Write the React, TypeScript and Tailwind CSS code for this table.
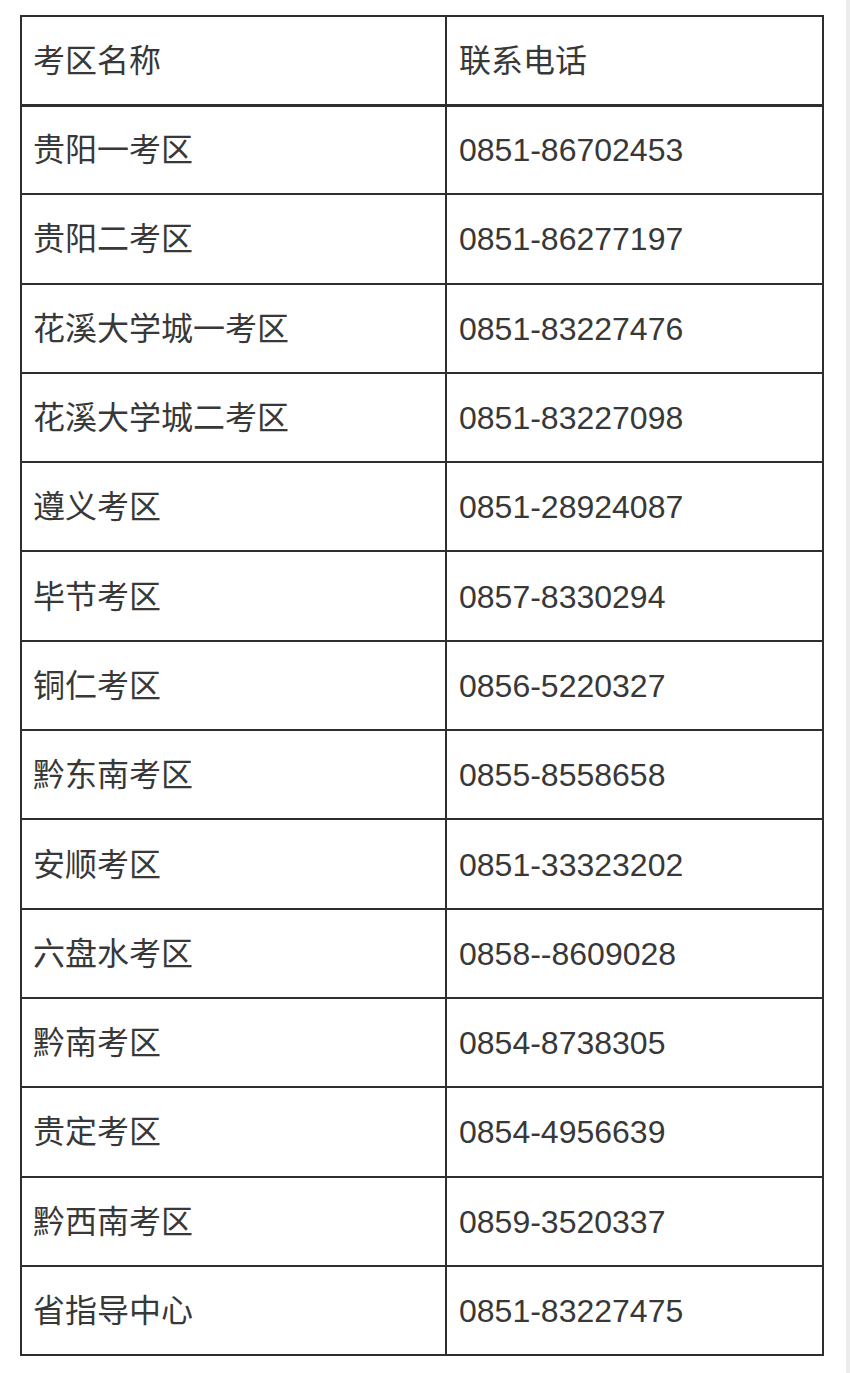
import React from 'react';

const rows: [string, string][] = [
  ['贵阳一考区', '0851-86702453'],
  ['贵阳二考区', '0851-86277197'],
  ['花溪大学城一考区', '0851-83227476'],
  ['花溪大学城二考区', '0851-83227098'],
  ['遵义考区', '0851-28924087'],
  ['毕节考区', '0857-8330294'],
  ['铜仁考区', '0856-5220327'],
  ['黔东南考区', '0855-8558658'],
  ['安顺考区', '0851-33323202'],
  ['六盘水考区', '0858--8609028'],
  ['黔南考区', '0854-8738305'],
  ['贵定考区', '0854-4956639'],
  ['黔西南考区', '0859-3520337'],
  ['省指导中心', '0851-83227475'],
];

const App: React.FC = () => {
  return (
    <div className="w-[850px] h-[1373px] bg-white flex font-['Liberation_Sans','Noto_Sans_CJK_SC',sans-serif] text-[#383838]">
      <div className="flex-1 pt-[15px] pl-[20px]">
        <table className="w-[804px] border-collapse border-2 border-[#2e2e2e]">
          <tbody>
            <tr className="h-[89px] border-b-[3px] border-[#2e2e2e]">
              <td className="w-[425px] border-2 border-[#2e2e2e] pl-[11px] text-[32px] pt-[2px]">考区名称</td>
              <td className="border-2 border-[#2e2e2e] pl-[12px] text-[32px] pt-[2px]">联系电话</td>
            </tr>
            {rows.map(([name, tel]) => (
              <tr key={name} className="h-[89.3px]">
                <td className="border-2 border-[#2e2e2e] pl-[11px] text-[32px] pt-[1px]">{name}</td>
                <td className="border-2 border-[#2e2e2e] pl-[12px] text-[32px] pt-[1px]">{tel}</td>
              </tr>
            ))}
          </tbody>
        </table>
      </div>
      <div className="w-[4px] bg-[#ececec]" />
    </div>
  );
};

export default App;
